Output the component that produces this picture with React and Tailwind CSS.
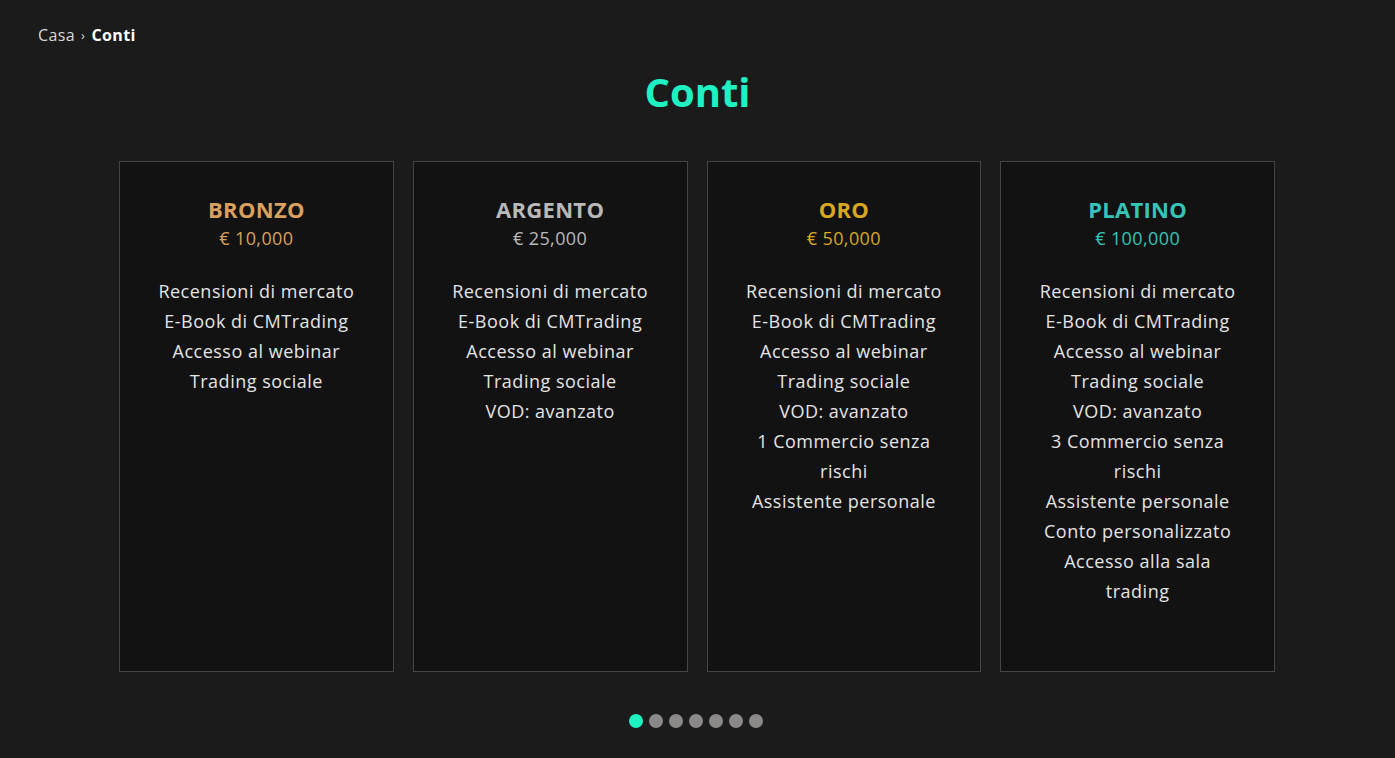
import React from 'react';

const plans = [
  {
    name: 'BRONZO',
    price: '€ 10,000',
    color: 'text-[#d9a15e]',
    items: ['Recensioni di mercato', 'E-Book di CMTrading', 'Accesso al webinar', 'Trading sociale'],
  },
  {
    name: 'ARGENTO',
    price: '€ 25,000',
    color: 'text-[#b9b9b9]',
    items: ['Recensioni di mercato', 'E-Book di CMTrading', 'Accesso al webinar', 'Trading sociale', 'VOD: avanzato'],
  },
  {
    name: 'ORO',
    price: '€ 50,000',
    color: 'text-[#d8a721]',
    items: [
      'Recensioni di mercato',
      'E-Book di CMTrading',
      'Accesso al webinar',
      'Trading sociale',
      'VOD: avanzato',
      '1 Commercio senza rischi',
      'Assistente personale',
    ],
  },
  {
    name: 'PLATINO',
    price: '€ 100,000',
    color: 'text-[#36c4b8]',
    items: [
      'Recensioni di mercato',
      'E-Book di CMTrading',
      'Accesso al webinar',
      'Trading sociale',
      'VOD: avanzato',
      '3 Commercio senza rischi',
      'Assistente personale',
      'Conto personalizzato',
      'Accesso alla sala trading',
    ],
  },
];

const Card = ({ plan }) => (
  <div className="h-[511px] border border-[#444] bg-[#121212] flex flex-col items-center pt-[33px]">
    <h3 className={`text-[22px] font-bold leading-[28px] tracking-[0.3px] ${plan.color}`}>{plan.name}</h3>
    <div className={`text-[18px] leading-[26px] mt-[2px] tracking-[0.4px] ${plan.color}`}>{plan.price}</div>
    <ul className="mt-[25px] w-[210px] text-center text-[18px] leading-[30px] tracking-[0.5px] text-[#e4e4e4]">
      {plan.items.map((item, i) => (
        <li key={i}>{item}</li>
      ))}
    </ul>
  </div>
);

const App = () => {
  return (
    <div className="min-h-[758px] bg-[#1c1b1c] font-['Open_Sans',sans-serif] pt-[24px]">
      <div className="px-[38px] flex items-center gap-[6px] text-[16px] leading-[22px] tracking-[0.4px]">
        <span className="text-[#d8d8d8]">Casa</span>
        <span className="text-[#d8d8d8] text-[13px]">›</span>
        <span className="text-white font-bold">Conti</span>
      </div>

      <h1 className="mt-[20px] text-center text-[40px] font-bold leading-[52px] text-[#1ef2c3]">Conti</h1>

      <div className="mt-[43px] ml-[119px] w-[1156px] grid grid-cols-4 gap-[19px]">
        {plans.map((p) => (
          <Card key={p.name} plan={p} />
        ))}
      </div>

      <div className="mt-[42px] flex justify-center gap-[6px] pr-[4px]">
        <span className="w-[14px] h-[14px] rounded-full bg-[#1ef2c3]" />
        {[1, 2, 3, 4, 5, 6].map((i) => (
          <span key={i} className="w-[14px] h-[14px] rounded-full bg-[#8c8989]" />
        ))}
      </div>
    </div>
  );
};

export default App;
